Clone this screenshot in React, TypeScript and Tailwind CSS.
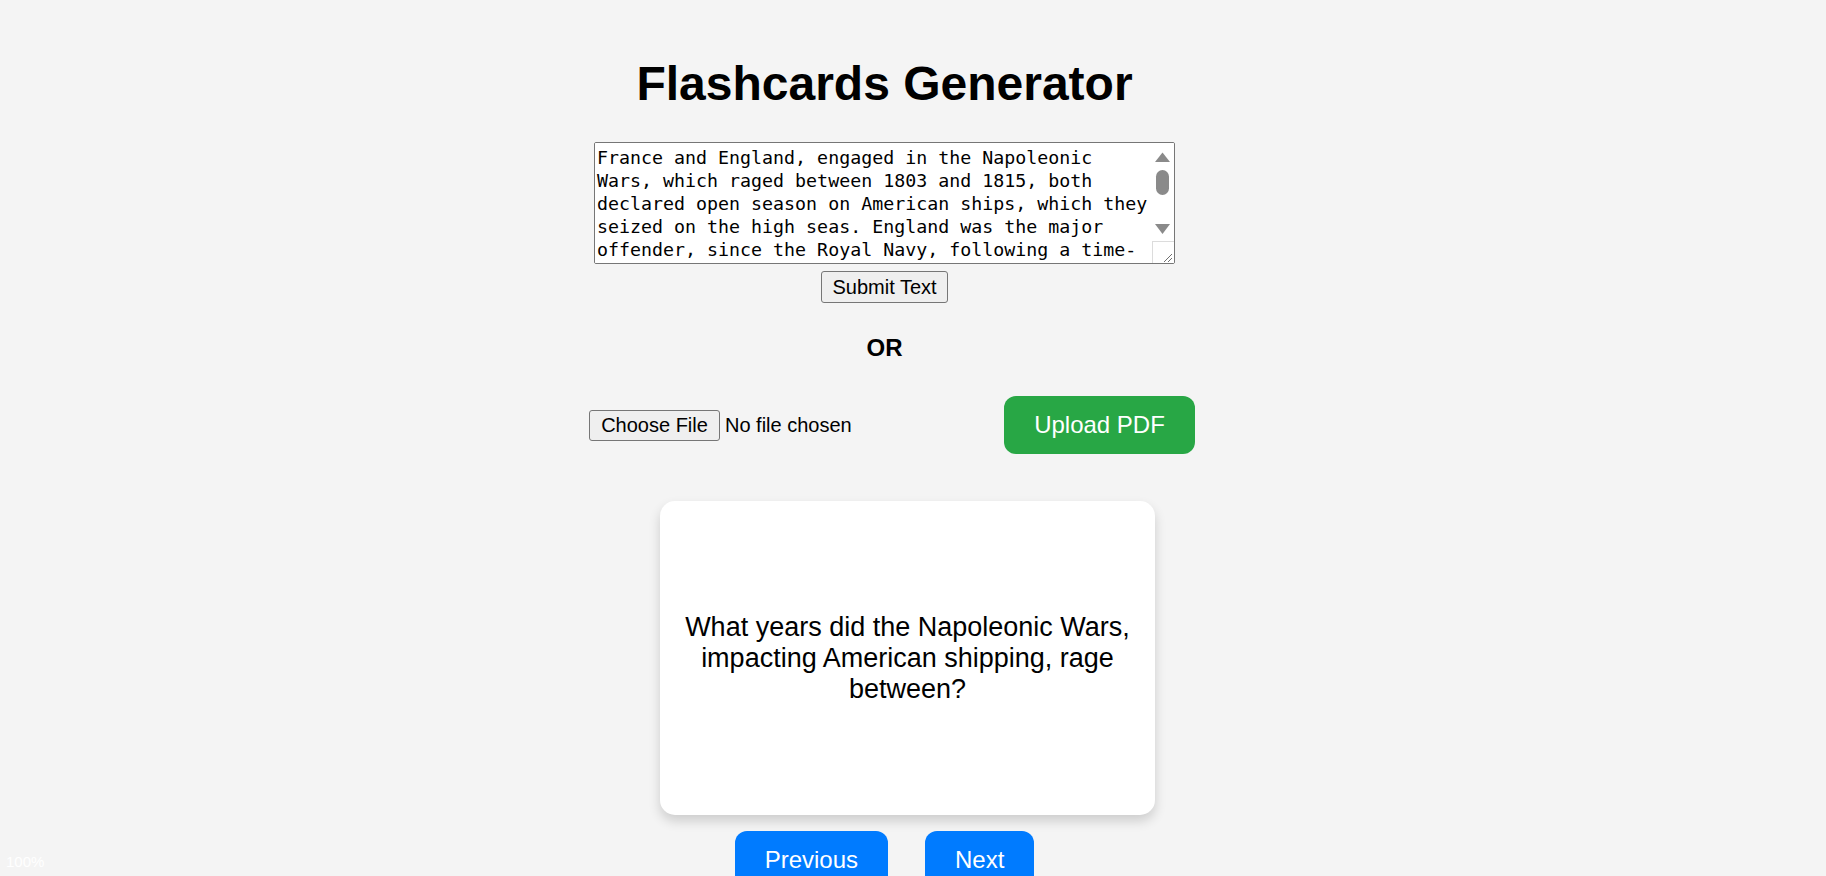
import React from "react";

const essay =
  "France and England, engaged in the Napoleonic Wars, which raged between 1803 and 1815, both declared open season on American ships, which they seized on the high seas. England was the major offender, since the Royal Navy, following a time-honored British practice, impressed American seamen into service on its warships.";

function FakeScrollbar() {
  return (
    <svg width="22" height="120" viewBox="0 0 22 120" className="shrink-0">
      <rect x="0" y="0" width="22" height="120" fill="#ffffff" />
      <polygon points="10.5,9.5 3,19 18,19" fill="#8a8a8a" />
      <rect x="4" y="27" width="13" height="25" rx="6.5" fill="#8a8a8a" />
      <polygon points="3,81 18,81 10.5,91" fill="#8a8a8a" />
      <rect x="0.5" y="98.5" width="22" height="22" fill="#ffffff" stroke="#dcdcdc" strokeWidth="1" />
      <line x1="20" y1="111" x2="12" y2="119" stroke="#6f6f6f" strokeWidth="1" />
      <line x1="20" y1="115" x2="16" y2="119" stroke="#6f6f6f" strokeWidth="1" />
    </svg>
  );
}

export default function App() {
  return (
    <div className="relative h-screen overflow-hidden bg-[#f4f4f4] font-['Liberation_Sans',Arial,sans-serif] text-black">
      <div className="flex flex-col items-center pr-[57px] pt-[56px]">
        <h1 className="text-[48px] leading-[55px] font-bold">Flashcards Generator</h1>

        <div className="mt-[31px] flex h-[122px] w-[581px] overflow-hidden rounded-[2px] border border-[#767676] bg-white">
          <textarea
            defaultValue={essay}
            spellCheck={false}
            className="h-full min-w-0 flex-1 resize-none overflow-hidden bg-white pl-[2px] pr-0 pt-[3px] font-['DejaVu_Sans_Mono',monospace] text-[18.3px] leading-[23px] text-black outline-none"
          />
          <FakeScrollbar />
        </div>

        <button className="mt-[7px] flex h-[32px] w-[127px] items-center justify-center rounded-[3px] border border-[#767676] bg-[#efefef] text-[20px] leading-[23px] text-black">
          Submit Text
        </button>

        <div className="mt-[31px] text-[24px] leading-[28px] font-bold">OR</div>

        <div className="ml-[15px] mt-[34px] flex w-[606px] items-center justify-between">
          <div className="flex items-center">
            <button className="flex h-[31px] w-[131px] items-center justify-center rounded-[3px] border border-[#767676] bg-[#efefef] text-[20px] leading-[23px] text-black">
              Choose File
            </button>
            <span className="ml-[5px] text-[20px] leading-[23px]">No file chosen</span>
          </div>
          <button className="h-[58px] w-[191px] rounded-[12px] bg-[#28a745] text-[24px] leading-[28px] text-white">
            Upload PDF
          </button>
        </div>

        <div className="ml-[46px] mt-[47px] flex h-[314px] w-[495px] items-center justify-center rounded-[15px] bg-white px-[22px] text-center text-[27px] leading-[31px] shadow-[0_6px_12px_rgba(0,0,0,0.16)]">
          What years did the Napoleonic Wars, impacting American shipping, rage between?
        </div>

        <div className="mt-[16px] flex gap-[37px]">
          <button className="h-[58px] rounded-[12px] bg-[#007bff] px-[30px] text-[24px] leading-[28px] text-white">
            Previous
          </button>
          <button className="h-[58px] rounded-[12px] bg-[#007bff] px-[30px] text-[24px] leading-[28px] text-white">
            Next
          </button>
        </div>
      </div>

      <div className="absolute bottom-[5px] left-[6px] text-[15px] leading-[18px] text-white">100%</div>
    </div>
  );
}
